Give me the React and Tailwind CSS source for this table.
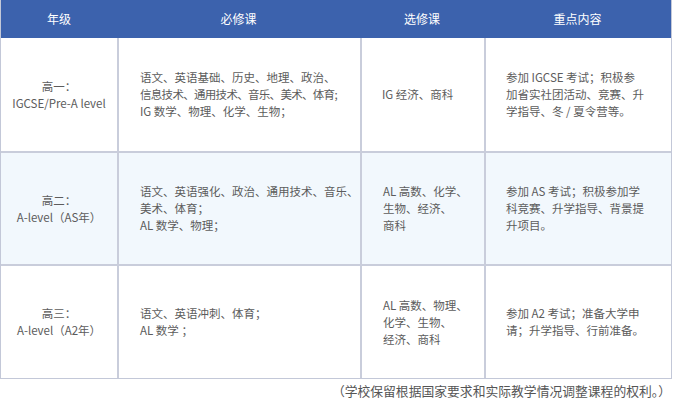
const rows = [
  {
    grade: ["高一：", "IGCSE/Pre-A level"],
    required: ["语文、英语基础、历史、地理、政治、", "信息技术、通用技术、音乐、美术、体育;", "IG 数学、物理、化学、生物；"],
    elective: ["IG 经济、商科"],
    focus: ["参加 IGCSE 考试；积极参", "加省实社团活动、竞赛、升", "学指导、冬 / 夏令营等。"],
    bg: "bg-white",
    h: "h-[113px]",
  },
  {
    grade: ["高二：", "A-level（AS年）"],
    required: ["语文、英语强化、政治、通用技术、音乐、", "美术、体育；", "AL 数学、物理；"],
    elective: ["AL 高数、化学、", "生物、经济、", "商科"],
    focus: ["参加 AS 考试；积极参加学", "科竞赛、升学指导、背景提", "升项目。"],
    bg: "bg-[#f2f8fd]",
    h: "h-[111px]",
  },
  {
    grade: ["高三：", "A-level（A2年）"],
    required: ["语文、英语冲刺、体育；", "AL 数学 ；"],
    elective: ["AL 高数、物理、", "化学、生物、", "经济、商科"],
    focus: ["参加 A2 考试；准备大学申", "请；升学指导、行前准备。"],
    bg: "bg-white",
    h: "h-[112px]",
  },
];

function Lines({ items, tight }) {
  return items.map((t, i) => (
    <span
      key={i}
      className={
        "block whitespace-nowrap " +
        (tight && i === 1 ? "tracking-[-0.7px]" : "")
      }
    >
      {t}
    </span>
  ));
}

export default function App() {
  return (
    <div
      className="w-[673px] h-[403px] bg-white text-[#5c5c5c]"
      style={{ fontFamily: '"Noto Sans CJK SC", "Noto Sans", sans-serif' }}
    >
      <div className="w-[672px] border-x border-b border-[#c3c8d8]">
        <div className="grid grid-cols-[116px_243px_124px_1fr] h-[38px] bg-[#3c62ad] text-white text-[12px]">
          {["年级", "必修课", "选修课", "重点内容"].map((h) => (
            <div key={h} className="flex items-center justify-center">
              {h}
            </div>
          ))}
        </div>
        {rows.map((r, i) => (
          <div
            key={i}
            className={
              "grid grid-cols-[116px_243px_124px_1fr] text-[11.5px] leading-[17px] " +
              r.bg +
              (i > 0 ? " border-t-2 border-[#c9cddb]" : "")
            }
          >
            <div className={r.h + " flex flex-col items-center justify-center text-center"}>
              <Lines items={r.grade} />
            </div>
            <div className="border-l-2 border-[#c9cddb] flex flex-col justify-center pl-[21px]">
              <Lines items={r.required} tight={i === 0} />
            </div>
            <div
              className={
                "border-l-2 border-[#c9cddb] flex flex-col justify-center " +
                (i === 0 ? "pl-[20px]" : "pl-[21px]")
              }
            >
              <Lines items={r.elective} />
            </div>
            <div className="border-l-2 border-[#c9cddb] flex flex-col justify-center pl-[20px]">
              <Lines items={r.focus} />
            </div>
          </div>
        ))}
      </div>
      <div className="flex justify-end pr-[2px] pt-[2px] text-[12.8px] leading-[20px] text-[#555]">
        （学校保留根据国家要求和实际教学情况调整课程的权利。）
      </div>
    </div>
  );
}
